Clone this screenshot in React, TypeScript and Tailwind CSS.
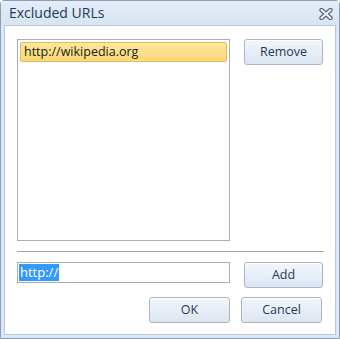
import React from 'react';

const font = { fontFamily: '"Open Sans", "Noto Sans", Arial, sans-serif' };

// Office 2010 style push button
function Button({ label, width }: { label: string; width: string }) {
  return (
    <button
      className={`${width} h-[26px] shrink-0 rounded-[3px] border border-[#a7b6c9] bg-gradient-to-b from-[#f3f7fc] to-[#dbe5f1] text-[12.5px] text-[#1e395b] shadow-[inset_0_1px_0_#ffffff]`}
    >
      {label}
    </button>
  );
}

export default function App() {
  return (
    <div
      className="flex h-[339px] w-[340px] flex-col rounded-t-[4px] border border-[#8d9db2] bg-[#dce7f4]"
      style={font}
    >
      {/* Title bar */}
      <div className="flex h-[24px] shrink-0 items-center justify-between bg-gradient-to-b from-[#e4edf8] to-[#d8e4f2] pl-[8px] pr-[6px]">
        <span className="text-[14px] leading-none text-[#1e395b]">Excluded URLs</span>
        <svg width="14" height="12" viewBox="0 0 14 12" className="mt-[2px]">
          <path d="M2.5 2 L11.5 10 M11.5 2 L2.5 10" stroke="#56657a" strokeWidth="4.4" strokeLinecap="round" />
          <path d="M2.5 2 L11.5 10 M11.5 2 L2.5 10" stroke="#f4f7fb" strokeWidth="2" strokeLinecap="round" />
        </svg>
      </div>

      {/* Client area */}
      <div className="mx-[3px] mb-[3px] flex flex-1 flex-col border border-[#b9c9dc] bg-white pl-[12px] pr-[12px] pt-[13px]">
        <div className="flex items-start gap-[14px]">
          <div className="h-[202px] w-[213px] shrink-0 border border-[#abadb3] p-[2px]">
            <div className="flex h-[20px] items-center rounded-[2px] border border-[#e1bb5e] bg-gradient-to-b from-[#fde89c] to-[#fbd877] pl-[3px] text-[12.5px] text-[#1b1b1b]">
              http://wikipedia.org
            </div>
          </div>
          <Button label="Remove" width="w-[79px]" />
        </div>

        <div className="mt-[10px] h-px w-[307px] bg-[#a0a0a0]" />

        <div className="mt-[10px] flex items-start gap-[14px]">
          <div className="flex h-[21px] w-[213px] shrink-0 items-center border border-[#abadb3] pl-[1px]">
            <span className="bg-[#3399ff] px-[1px] text-[13px] leading-[17px] text-white">http://</span>
          </div>
          <Button label="Add" width="w-[79px]" />
        </div>

        <div className="mt-[9px] flex justify-end gap-[11px] pr-[1px]">
          <Button label="OK" width="w-[81px]" />
          <Button label="Cancel" width="w-[81px]" />
        </div>
      </div>
    </div>
  );
}
